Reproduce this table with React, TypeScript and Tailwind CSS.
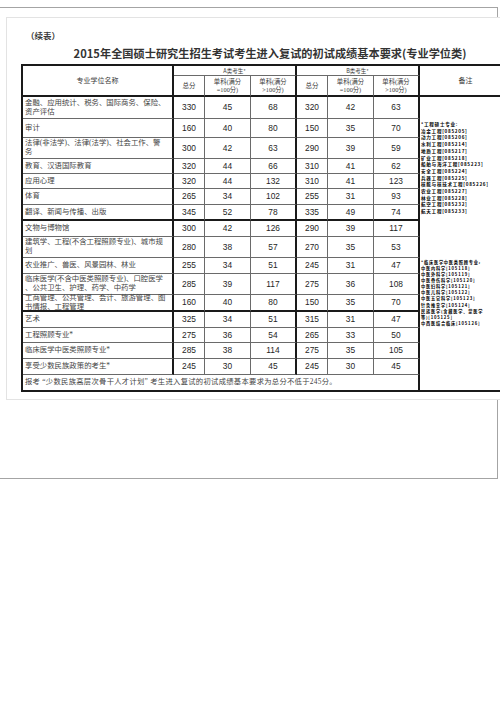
import React from "react";

type Row = { name: string[]; a: [string, string, string]; b: [string, string, string] };

const rows: Row[] = [
  { name: ["金融、应用统计、税务、国际商务、保险、", "资产评估"], a: ["330", "45", "68"], b: ["320", "42", "63"] },
  { name: ["审计"], a: ["160", "40", "80"], b: ["150", "35", "70"] },
  { name: ["法律(非法学)、法律(法学)、社会工作、警", "务"], a: ["300", "42", "63"], b: ["290", "39", "59"] },
  { name: ["教育、汉语国际教育"], a: ["320", "44", "66"], b: ["310", "41", "62"] },
  { name: ["应用心理"], a: ["320", "44", "132"], b: ["310", "41", "123"] },
  { name: ["体育"], a: ["265", "34", "102"], b: ["255", "31", "93"] },
  { name: ["翻译、新闻与传播、出版"], a: ["345", "52", "78"], b: ["335", "49", "74"] },
  { name: ["文物与博物馆"], a: ["300", "42", "126"], b: ["290", "39", "117"] },
  { name: ["建筑学、工程(不含工程照顾专业)、城市规", "划"], a: ["280", "38", "57"], b: ["270", "35", "53"] },
  { name: ["农业推广、兽医、风景园林、林业"], a: ["255", "34", "51"], b: ["245", "31", "47"] },
  { name: ["临床医学(不含中医类照顾专业)、口腔医学", "、公共卫生、护理、药学、中药学"], a: ["285", "39", "117"], b: ["275", "36", "108"] },
  { name: ["工商管理、公共管理、会计、旅游管理、图", "书情报、工程管理"], a: ["160", "40", "80"], b: ["150", "35", "70"] },
  { name: ["艺术"], a: ["325", "34", "51"], b: ["315", "31", "47"] },
  { name: ["工程照顾专业*"], a: ["275", "36", "54"], b: ["265", "33", "50"] },
  { name: ["临床医学中医类照顾专业*"], a: ["285", "38", "114"], b: ["275", "35", "105"] },
  { name: ["享受少数民族政策的考生*"], a: ["245", "30", "45"], b: ["245", "30", "45"] },
];

const colRight = [
  "border-r-2 border-r-[#1a1a1a]",
  "border-r border-r-[#6a6a6a]",
  "border-r border-r-[#6a6a6a]",
  "border-r-2 border-r-[#1a1a1a]",
  "border-r border-r-[#6a6a6a]",
  "border-r border-r-[#6a6a6a]",
  "border-r-2 border-r-[#1a1a1a]",
];

const thin = "border-b border-b-[#6a6a6a]";
const thick = "border-b-2 border-b-[#1a1a1a]";

const block1 = [
  "*工程硕士专业:",
  "冶金工程[085205]",
  "动力工程[085206]",
  "水利工程[085214]",
  "地质工程[085217]",
  "矿业工程[085218]",
  "船舶与海洋工程[085223]",
  "安全工程[085224]",
  "兵器工程[085225]",
  "核能与核技术工程[085226]",
  "农业工程[085227]",
  "林业工程[085228]",
  "航空工程[085232]",
  "航天工程[085233]",
];

const block2 = [
  "*临床医学中医类照顾专业:",
  "中医内科学[105118]",
  "中医外科学[105119]",
  "中医骨伤科学[105120]",
  "中医妇科学[105121]",
  "中医儿科学[105122]",
  "中医五官科学[105123]",
  "针灸推拿学[105124]",
  "民族医学(含藏医学、蒙医学",
  "等)[105125]",
  "中西医结合临床[105126]",
];

const cjk = { fontFamily: '"Noto Sans CJK SC", "Noto Sans", sans-serif' };
const serifCjk = { fontFamily: '"Liberation Serif", "Noto Sans CJK SC", serif' };
const num = { fontFamily: '"Liberation Sans", Arial, sans-serif' };

export default function App() {
  return (
    <div className="w-[500px] h-[707px] overflow-hidden bg-white pt-[7px]" style={cjk}>
      <div className="w-[498px] h-[472px] border-t border-r border-b border-[#a4a4a4]">
        <div className="mt-[9px] ml-[6px] w-[520px] h-[383px] border border-[#e3e3e3] bg-white pl-[14px] pt-[12px]">
          <div className="text-[8.5px] leading-[10px] font-bold text-[#3a3a3a] pl-[5px]">（续表）</div>
          <div className="w-[492px] mt-[6px] text-center text-[11.2px] leading-[14px] font-bold text-[#333] pl-[6px] whitespace-nowrap">
            2015年全国硕士研究生招生考试考生进入复试的初试成绩基本要求(专业学位类)
          </div>
          <div
            className="mt-[4px] grid w-[492px] grid-cols-[151px_31px_46px_46px_31px_46px_46px_93px] grid-rows-[10px_21px_22px_19px_21px_15px_15px_16px_16px_16px_21px_16px_21px_17px_16px_15px_16px_16px_17px] border-l-2 border-t-2 border-[#1a1a1a] text-[#3a3a3a]"
          >
            {/* header */}
            <div className={`row-span-2 flex items-center justify-center text-[7px] ${colRight[0]} ${thick}`}>专业学位名称</div>
            <div className={`col-span-3 flex items-center justify-center text-[5.5px] leading-[6px] ${colRight[3]} ${thin}`}>A类考生*</div>
            <div className={`col-span-3 flex items-center justify-center text-[5.5px] leading-[6px] ${colRight[6]} ${thin}`}>B类考生*</div>
            <div className={`row-span-2 flex items-center justify-center text-[7px] border-r-2 border-r-[#1a1a1a] ${thick}`}>备注</div>
            {[0, 1].map((g) => (
              <React.Fragment key={g}>
                <div className={`flex items-center justify-center text-[6.5px] ${colRight[1 + g * 3]} ${thick}`}>总分</div>
                <div className={`flex flex-col items-center justify-center text-[6.3px] leading-[8px] ${colRight[2 + g * 3]} ${thick}`} style={serifCjk}>
                  <span>单科(满分</span>
                  <span>=100分)</span>
                </div>
                <div className={`flex flex-col items-center justify-center text-[6.3px] leading-[8px] ${colRight[3 + g * 3]} ${thick}`} style={serifCjk}>
                  <span>单科(满分</span>
                  <span>&gt;100分)</span>
                </div>
              </React.Fragment>
            ))}
            {/* remarks column */}
            <div className="col-start-8 row-start-3 row-span-17 border-r-2 border-r-[#1a1a1a] border-b-2 border-b-[#1a1a1a] pl-[1px] font-bold text-black whitespace-nowrap">
              <div className="mt-[24px] text-[4.6px] leading-[6.7px] tracking-[0.7px]">
                {block1.map((l) => (
                  <div key={l}>{l}</div>
                ))}
              </div>
              <div className="mt-[44px] text-[4.2px] leading-[6.1px] tracking-[0.8px]">
                {block2.map((l) => (
                  <div key={l}>{l}</div>
                ))}
              </div>
            </div>
            {/* data rows */}
            {rows.map((r, i) => {
              const bb = i === 6 || i === 11 ? thick : thin;
              const vals = [...r.a, ...r.b];
              return (
                <React.Fragment key={i}>
                  <div
                    className={`flex flex-col justify-center pl-[2px] text-[7.4px] leading-[8.6px] text-[#444] whitespace-nowrap ${colRight[0]} ${bb}`}
                    style={serifCjk}
                  >
                    {r.name.map((n, k) => (
                      <span key={k}>{n}</span>
                    ))}
                  </div>
                  {vals.map((v, k) => (
                    <div
                      key={k}
                      className={`flex items-center justify-center text-[8.4px] text-[#262626] ${colRight[k + 1]} ${bb}`}
                      style={num}
                    >
                      {v}
                    </div>
                  ))}
                </React.Fragment>
              );
            })}
            <div
              className={`col-span-7 flex items-center pl-[2px] text-[7.3px] tracking-[0.3px] text-[#444] whitespace-nowrap ${colRight[6]} ${thick}`}
              style={serifCjk}
            >
              报考 “少数民族高层次骨干人才计划” 考生进入复试的初试成绩基本要求为总分不低于245分。
            </div>
          </div>
        </div>
      </div>
    </div>
  );
}
